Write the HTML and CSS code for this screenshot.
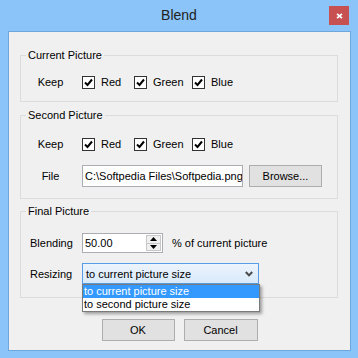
FILE: index.html
```html
<!DOCTYPE html>
<html lang="en">
<head>
    <meta charset="UTF-8">
    <title>Blend</title>
    <link rel="stylesheet" href="styles.css">
</head>
<body>
    <div class="window">
        <div class="titlebar">
            <span class="title">Blend</span>
            <span class="close">
                <svg width="7" height="6" viewBox="0 0 7 6"><path d="M1 0.8 L6 5.2 M6 0.8 L1 5.2" stroke="#fff" stroke-width="1.7"/></svg>
            </span>
        </div>

        <div class="client">
            <!-- current picture -->
            <fieldset class="group g1">
                <legend>Current Picture</legend>
                <div class="row">
                    <span class="lbl center">Keep</span>
                    <div class="checks">
                        <label class="chk"><span class="box"><svg width="9" height="9" viewBox="0 0 9 9"><path d="M1 4.5 L3.5 7 L8 1.5" fill="none" stroke="#000" stroke-width="2"/></svg></span>Red</label>
                        <label class="chk"><span class="box"><svg width="9" height="9" viewBox="0 0 9 9"><path d="M1 4.5 L3.5 7 L8 1.5" fill="none" stroke="#000" stroke-width="2"/></svg></span>Green</label>
                        <label class="chk"><span class="box"><svg width="9" height="9" viewBox="0 0 9 9"><path d="M1 4.5 L3.5 7 L8 1.5" fill="none" stroke="#000" stroke-width="2"/></svg></span>Blue</label>
                    </div>
                </div>
            </fieldset>

            <!-- second picture -->
            <fieldset class="group g2">
                <legend>Second Picture</legend>
                <div class="row">
                    <span class="lbl center">Keep</span>
                    <div class="checks">
                        <label class="chk"><span class="box"><svg width="9" height="9" viewBox="0 0 9 9"><path d="M1 4.5 L3.5 7 L8 1.5" fill="none" stroke="#000" stroke-width="2"/></svg></span>Red</label>
                        <label class="chk"><span class="box"><svg width="9" height="9" viewBox="0 0 9 9"><path d="M1 4.5 L3.5 7 L8 1.5" fill="none" stroke="#000" stroke-width="2"/></svg></span>Green</label>
                        <label class="chk"><span class="box"><svg width="9" height="9" viewBox="0 0 9 9"><path d="M1 4.5 L3.5 7 L8 1.5" fill="none" stroke="#000" stroke-width="2"/></svg></span>Blue</label>
                    </div>
                </div>
                <div class="row row-file">
                    <span class="lbl center">File</span>
                    <span class="textbox">C:\Softpedia Files\Softpedia.png</span>
                    <button class="btn browse">Browse...</button>
                </div>
            </fieldset>

            <!-- final picture -->
            <fieldset class="group g3">
                <legend>Final Picture</legend>
                <div class="row">
                    <span class="lbl">Blending</span>
                    <div class="numeric">
                        <span class="num-value">50.00</span>
                        <span class="spin">
                            <span class="spin-up"><svg width="7" height="4" viewBox="0 0 7 4"><path d="M0 4 L3.5 0 L7 4 Z" fill="#000"/></svg></span>
                            <span class="spin-down"><svg width="7" height="4" viewBox="0 0 7 4"><path d="M0 0 L3.5 4 L7 0 Z" fill="#000"/></svg></span>
                        </span>
                    </div>
                    <span class="hint">% of current picture</span>
                </div>
                <div class="row row-resize">
                    <span class="lbl">Resizing</span>
                    <div class="combo">
                        <span>to current picture size</span>
                        <svg class="chevron" width="8" height="6" viewBox="0 0 8 6"><path d="M0.8 1 L4 4.4 L7.2 1" fill="none" stroke="#4a4a4a" stroke-width="2"/></svg>
                        <div class="list">
                            <div class="opt sel">to current picture size</div>
                            <div class="opt">to second picture size</div>
                        </div>
                    </div>
                </div>
            </fieldset>

            <div class="actions">
                <button class="btn ok">OK</button>
                <button class="btn cancel">Cancel</button>
            </div>
        </div>
    </div>
</body>
</html>
```

FILE: styles.css
```css
/* --- window frame --- */
body {
    margin: 0;
    font-family: "Liberation Sans", Arial, sans-serif;
    font-size: 11px;
    color: #000;
}

.window {
    width: 358px;
    height: 358px;
    background: #8bc4f8;
    display: flex;
    flex-direction: column;
}

.titlebar {
    height: 31px;
    flex: none;
    display: grid;
    grid-template-columns: 1fr auto 1fr;
    align-items: start;
}

.title {
    grid-column: 2;
    font-size: 14px;
    line-height: 16px;
    margin-top: 7px;
    color: #222;
}

.close {
    grid-column: 3;
    justify-self: end;
    width: 20px;
    height: 19px;
    margin: 6px 9px 0 0;
    background: #c75050;
    display: flex;
    align-items: center;
    justify-content: center;
}

.client {
    flex: 1;
    margin: 0 7px 7px 8px;
    border: 1px solid #6fa6dc;
    background: #f0f0f0;
    padding-top: 16px;
}

/* --- group boxes --- */
.group {
    margin: 0 12px 0 11px;
    border: 1px solid #dcdcdc;
    padding: 10px 9px 9px;
    min-width: 0;
}

.group legend {
    font-size: 11px;
    line-height: 14px;
    padding: 0 2px;
    margin-left: -4px;
}

.g2 {
    margin-top: 6px;
    padding-top: 12px;
    padding-bottom: 11px;
}

.g3 {
    margin-top: 5px;
    padding-top: 15px;
    padding-bottom: 13px;
}

.row {
    display: flex;
    align-items: center;
    height: 20px;
}

.row-file {
    height: 22px;
    margin-top: 11px;
}

.row-resize {
    height: 21px;
    margin-top: 10px;
}

.lbl {
    width: 52px;
    flex: none;
}

.lbl.center {
    width: 41px;
    margin-right: 11px;
    text-align: center;
}

/* --- checkboxes --- */
.checks {
    display: flex;
}

.chk {
    display: flex;
    align-items: center;
    gap: 6px;
}

.chk:nth-child(1) { width: 52px; }
.chk:nth-child(2) { width: 58px; }

.box {
    width: 13px;
    height: 13px;
    box-sizing: border-box;
    border: 1px solid #333;
    background: #fff;
    display: flex;
    align-items: center;
    justify-content: center;
}

/* --- inputs --- */
.textbox {
    width: 161px;
    height: 22px;
    box-sizing: border-box;
    border: 1px solid #abadb3;
    background: #fff;
    padding-left: 2px;
    line-height: 20px;
    white-space: nowrap;
    overflow: hidden;
}

.btn {
    font: inherit;
    color: #000;
    height: 22px;
    padding: 0;
    border: 1px solid #adadad;
    background: #e1e1e1;
}

.browse {
    width: 73px;
    margin-left: 6px;
}

.numeric {
    width: 81px;
    height: 20px;
    box-sizing: border-box;
    border: 1px solid #abadb3;
    background: #fff;
    display: flex;
    align-items: center;
    padding-left: 2px;
}

.spin {
    margin-left: auto;
    margin-right: 1px;
    width: 15px;
    height: 16px;
    box-sizing: border-box;
    border: 1px solid #c8c8c8;
    background: #f0f0f0;
    display: flex;
    flex-direction: column;
}

.spin span {
    flex: 1;
    display: flex;
    align-items: center;
    justify-content: center;
}

.spin-up {
    border-bottom: 1px solid #c8c8c8;
}

.hint {
    margin-left: 9px;
}

.combo {
    position: relative;
    width: 177px;
    height: 21px;
    box-sizing: border-box;
    border: 1px solid #569de5;
    background: linear-gradient(#ecf4fc, #d9eafb);
    display: flex;
    align-items: center;
    padding-left: 3px;
}

.chevron {
    margin-left: auto;
    margin-right: 5px;
}

/* open drop-down list */
.list {
    position: absolute;
    left: -1px;
    top: 20px;
    width: 178px;
    box-sizing: border-box;
    border: 1px solid #7a7a7a;
    background: #fff;
    box-shadow: 2px 2px 3px rgba(0, 0, 0, 0.35);
    z-index: 3;
}

.opt {
    height: 13px;
    line-height: 13px;
    padding-left: 1px;
    white-space: nowrap;
}

.opt.sel {
    background: #3399ff;
    color: #fff;
}

/* --- bottom buttons --- */
.actions {
    display: flex;
    justify-content: center;
    gap: 9px;
    margin-top: 21px;
}

.ok { width: 73px; }
.cancel { width: 74px; }
```
